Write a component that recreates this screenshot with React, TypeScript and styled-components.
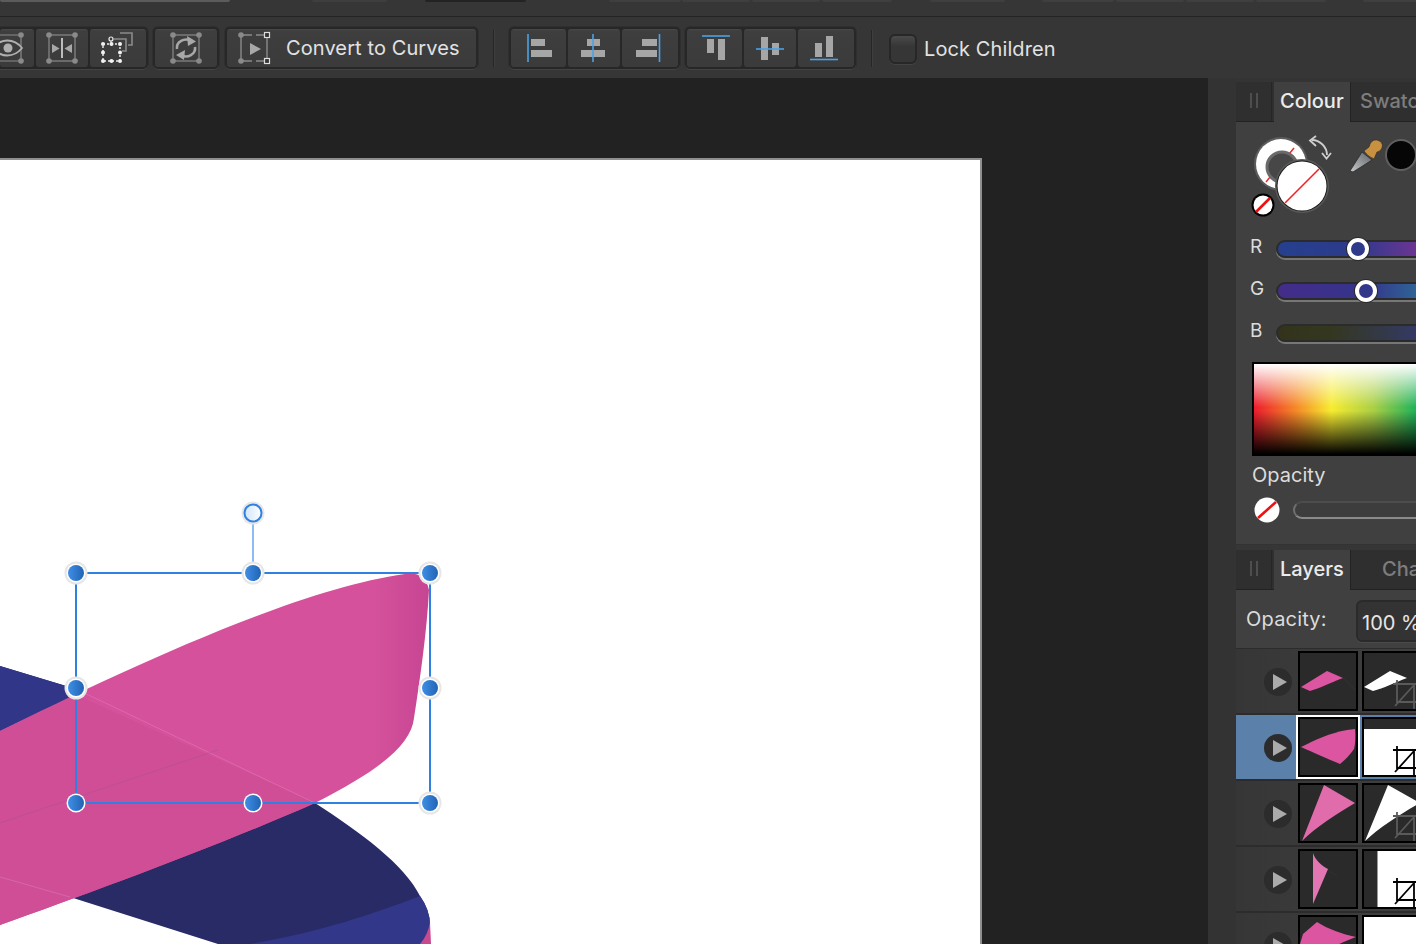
import React from "react";
import styled, { createGlobalStyle } from "styled-components";

const Global = createGlobalStyle`
  html, body { margin: 0; padding: 0; background: #222; overflow: hidden; }
  body { font-family: Inter, "Liberation Sans", sans-serif; -webkit-font-smoothing: antialiased; }
`;

const Root = styled.div`
  width: 1416px; height: 944px; overflow: hidden; display: flex; flex-direction: column; background: #222;
`;
const TopStrip = styled.div`
  height: 16px; flex: none; display: flex; align-items: flex-start; background: #363636; border-bottom: 1px solid #232323;
`;
const StripSeg = styled.div<{ $w: number; $ml: number; $c: string }>`
  flex: none; height: 2px; width: ${p => p.$w}px; margin-left: ${p => p.$ml}px; background: ${p => p.$c}; border-radius: 0 0 3px 3px;
`;
const Toolbar = styled.div`
  height: 61px; flex: none; display: flex; align-items: flex-start; padding-top: 10px; box-sizing: border-box; background: #363636;
`;
const Group = styled.div<{ $ml: number; $flat?: boolean }>`
  flex: none; display: flex; gap: 2px; height: 42px; box-sizing: border-box; padding: 2px;
  margin-left: ${p => p.$ml}px; background: #272727;
  border-radius: ${p => (p.$flat ? "0 5px 5px 0" : "5px")};
  padding-left: ${p => (p.$flat ? 0 : 2)}px;
  box-shadow: 0 1px 0 #434343, 0 0 0 1px #2f2f2f;
`;
const ToolButton = styled.div`
  flex: none; display: flex; align-items: center; height: 38px; border-radius: 3px;
  background: linear-gradient(#494949 0, #3e3e3e 2px, #3b3b3b 100%);
`;
const ToolIcon = styled.svg`
  flex: none; display: block; height: 38px;
`;
const ToolLabel = styled.span`
  font-size: 20px; color: #e2e2e2; white-space: nowrap; letter-spacing: 0.1px;
`;
const Sep = styled.div<{ $ml: number }>`
  flex: none; width: 1px; height: 37px; margin-top: 3px; margin-left: ${p => p.$ml}px; background: #262626; box-shadow: 1px 0 0 #3e3e3e;
`;
const Check = styled.div`
  flex: none; width: 28px; height: 30px; margin: 7px 0 0 17px; box-sizing: border-box; border: 2px solid #272727; border-radius: 6px;
  background: linear-gradient(#4a4a4a, #363636 40%); box-shadow: 0 1px 0 #434343;
`;
const CheckLabel = styled.span`
  font-size: 20px; color: #e2e2e2; white-space: nowrap; margin: 10px 0 0 7px; letter-spacing: 0.1px;
`;
const Main = styled.div`
  flex: 1; min-height: 0; display: flex;
`;
const Canvas = styled.div`
  width: 1208px; flex: none; padding-top: 80px; box-sizing: border-box; background: #222; overflow: hidden;
`;
const Page = styled.div`
  position: relative; width: 982px; height: 790px; box-sizing: border-box; background: #fff;
  border-top: 2px solid #8f8f8f; border-right: 2px solid #8f8f8f;
`;
const Art = styled.svg`
  position: absolute; left: 0; top: 0; display: block; overflow: visible;
`;
const Gutter = styled.div`
  width: 28px; flex: none; background: #333;
`;
const Panel = styled.div`
  width: 180px; flex: none; background: #343434; padding-top: 4px; box-sizing: border-box; overflow: hidden; display: flex; flex-direction: column;
`;
const TabBar = styled.div`
  height: 40px; flex: none; display: flex; background: #2f2f2f; border-bottom: 1px solid #222; box-sizing: border-box;
`;
const Grip = styled.div`
  width: 36px; flex: none; display: flex; justify-content: center; gap: 4px; padding-top: 11px; box-sizing: border-box; border-right: 1px solid #262626;
  i { display: block; width: 2px; height: 15px; background: #4e4e4e; }
`;
const Tab = styled.div<{ $active?: boolean; $pl: number }>`
  flex: none; font-size: 20px; line-height: 38px; white-space: nowrap; box-sizing: border-box;
  margin-left: ${p => (p.$active ? 2 : 0)}px;
  width: ${p => (p.$active ? "77px" : "auto")};
  padding-left: ${p => p.$pl}px;
  font-weight: 500;
  color: ${p => (p.$active ? "#ececec" : "#7d7d7d")};
  background: ${p => (p.$active ? "#404040" : "transparent")};
  height: ${p => (p.$active ? "40px" : "39px")};
  border-right: ${p => (p.$active ? "1px solid #222" : "none")};
`;
const ColourBody = styled.div`
  height: 422px; flex: none; background: #404040; display: flex; flex-direction: column; box-sizing: border-box; padding-top: 12px;
`;
const PanelGap = styled.div`
  height: 6px; flex: none; background: #363636; border-top: 1px solid #333;
  box-sizing: border-box;
`;
const SwatchRow = styled.div`
  height: 84px; flex: none; display: flex; padding-left: 14px; align-items: flex-start; margin-bottom: 10px;
`;
const Selector = styled.svg`
  flex: none; display: block;
`;
const Dropper = styled.svg`
  flex: none; display: block; margin: 4px 0 0 14px;
`;
const BlackSwatch = styled.div`
  flex: none; width: 32px; height: 32px; box-sizing: border-box; margin: 5px 0 0 1px; border-radius: 50%; background: #060606; border: 2px solid #5f5f5f;
`;
const SliderRow = styled.div`
  height: 42px; flex: none; display: flex; align-items: center; padding-left: 14px;
`;
const SliderLabel = styled.span`
  flex: none; width: 26px; font-size: 19px; color: #dcdcdc; margin-top: -5px;
`;
const Track = styled.div<{ $bg: string }>`
  position: relative; flex: none; width: 180px; height: 18px; box-sizing: border-box; border-radius: 9px;
  border: 2px solid #2b2b2b; background: ${p => p.$bg}; box-shadow: 0 2px 0 #777;
`;
const Knob = styled.div<{ $x: number; $c: string }>`
  position: absolute; top: -4px; left: ${p => p.$x}px; width: 22px; height: 22px; box-sizing: border-box; border-radius: 50%;
  background: ${p => p.$c}; border: 4px solid #fff; box-shadow: 0 0 0 1px #2a2a2a;
`;
const Picker = styled.div`
  flex: none; width: 180px; height: 94px; margin: 8px 0 0 16px; box-sizing: border-box; border: 2px solid #000;
  background:
    linear-gradient(to bottom, #fff 0, rgba(255,255,255,0) 48%, rgba(0,0,0,0) 52%, #000 100%),
    linear-gradient(to right, #ec1c2e 0, #f58a28 24%, #f7ec30 44%, #aacf45 68%, #1fb25a 92%, #18b48a 100%);
`;
const OpacityLabel = styled.div`
  flex: none; font-size: 20px; color: #dcdcdc; margin: 7px 0 0 16px; line-height: 24px;
`;
const OpacityRow = styled.div`
  flex: none; height: 28px; margin-top: 9px; padding-left: 18px; display: flex; align-items: center; gap: 13px;
`;
const NoFill = styled.svg`
  flex: none; display: block;
`;
const OpacityTrack = styled.div`
  flex: none; width: 180px; height: 18px; box-sizing: border-box; border-radius: 9px; background: #3d3d3d;
  border: 2px solid #6f6f6f; border-top-color: #4d4d4d; border-bottom-color: #8a8a8a;
`;
const LayersBody = styled.div`
  flex: 1; min-height: 0; background: #3a3a3a; display: flex; flex-direction: column;
`;
const LayersHead = styled.div`
  height: 59px; flex: none; box-sizing: border-box; background: #404040; border-bottom: 1px solid #2c2c2c; display: flex; padding: 10px 0 0 10px;
`;
const HeadLabel = styled.span`
  flex: none; width: 110px; font-size: 20px; color: #dcdcdc; line-height: 38px; letter-spacing: 0.2px;
`;
const ValueBox = styled.div`
  flex: none; width: 80px; height: 42px; box-sizing: border-box; padding-left: 4px; border: 2px solid #2a2a2a; border-radius: 6px; background: #333;
  font-size: 20px; line-height: 42px; color: #e6e6e6; white-space: nowrap; box-shadow: 0 1px 0 #4a4a4a;
`;
const LayerRow = styled.div<{ $sel?: boolean }>`
  height: 66px; flex: none; box-sizing: border-box; border-bottom: 2px solid #2c2c2c; display: flex; align-items: flex-start; padding: 2px 0 0 28px;
  background: ${p => (p.$sel ? "#5b80a9" : "linear-gradient(to right, #363636, #404040)")};
`;
const Play = styled.div`
  flex: none; width: 28px; height: 28px; margin: 17px 6px 0 0; border-radius: 50%; background: #2c2c2c; display: flex; align-items: center; justify-content: center;
`;
const PlayIcon = styled.svg`
  display: block; margin-left: 3px;
`;
const Thumb = styled.div<{ $first?: boolean; $sel?: boolean; $bg?: string }>`
  flex: none; width: 60px; height: 60px; box-sizing: border-box; border: 2px solid #000; background: ${p => p.$bg || "#2a2a2a"};
  margin-right: 4px; overflow: hidden;
  box-shadow: ${p => (p.$sel && p.$first ? "0 0 0 2px #fff" : "none")};
`;
const ThumbArt = styled.svg`
  display: block;
`;

const Dot = ({ x, y }: { x: number; y: number }) => <circle cx={x} cy={y} r={2.8} fill="#8a8a8a" />;
const G = "#8a8a8a";
const Bl = "#4aa3e8";
const B = "#a6a6a6";

const Crop = ({ c }: { c: string }) => (
  <path d="M29 31H56M33 27V49H56M50 31V56M31 53L50 32" fill="none" stroke={c} strokeWidth={1.8} />
);

const PinkA = "#dc55a0";

const rows = [
  {
    pink: <><path d="M1 34L27 18L43 25C30 30 20 35 10 38Z" fill={PinkA} /><path d="M43 25L55 37" stroke="#4a2a3a" strokeWidth={0.6} /></>,
    white: <><path d="M0 34L26 18L43 25C30 30 20 35 9 38Z" fill="#fff" /><Crop c="#5a5a5a" /></>,
    bg: "#2a2a2a",
  },
  {
    pink: <path d="M1 28C15 21 30 14 47 11L55 10Q56 22 54 30C50 36 45 41 40 45C28 40 12 33 1 28Z" fill={PinkA} />,
    white: <><rect x={0} y={10} width={56} height={46} fill="#fff" /><Crop c="#000" /></>,
    bg: "#2a2a2a",
    sel: true,
  },
  {
    pink: <path d="M24 0L55 18C38 28 16 42 2 56Z" fill="#e06cab" />,
    white: <><path d="M24 0L56 18C38 28 16 42 1 56Z" fill="#fff" /><Crop c="#5a5a5a" /></>,
    bg: "#2a2a2a",
  },
  {
    pink: <><path d="M13 2C15 9 22 15 28 18L13 53Z" fill="#e276b2" /><path d="M29 20L37 25" stroke="#4a2a3a" strokeWidth={0.6} /></>,
    white: <><rect x={0} y={0} width={13} height={56} fill="#2a2a2a" /><rect x={13} y={0} width={1} height={56} fill="#999" /><rect x={14} y={0} width={42} height={56} fill="#fff" /><Crop c="#000" /></>,
    bg: "#2a2a2a",
  },
  {
    pink: <path d="M0 27L3 17L17 5C28 12 42 17 56 20C40 26 28 32 18 40L0 40Z" fill="#dc55a0" />,
    white: <rect x={0} y={0} width={56} height={56} fill="#fff" />,
    bg: "#fff",
  },
];

const segs = [
  { w: 230, ml: 0, c: "#5c5c5c" },
  { w: 75, ml: 82, c: "#3e3e3e" },
  { w: 101, ml: 38, c: "#232323" },
  { w: 72, ml: 83, c: "#3f3f3f" },
  { w: 68, ml: 1, c: "#3f3f3f" },
  { w: 68, ml: 2, c: "#3f3f3f" },
  { w: 70, ml: 2, c: "#3f3f3f" },
  { w: 75, ml: 38, c: "#3f3f3f" },
  { w: 72, ml: 37, c: "#3f3f3f" },
  { w: 68, ml: 2, c: "#3f3f3f" },
  { w: 68, ml: 2, c: "#3f3f3f" },
  { w: 70, ml: 2, c: "#3f3f3f" },
  { w: 60, ml: 37, c: "#3f3f3f" },
];

const Tool = ({ x, w, children, label }: { x: number; w: number; children: React.ReactNode; label?: string }) => (
  <ToolButton style={{ width: w }}>
    <ToolIcon width={label ? 59 : w} height={38} viewBox={`${x} 29 ${label ? 59 : w} 38`}>{children}</ToolIcon>
    {label && <ToolLabel>{label}</ToolLabel>}
  </ToolButton>
);

const Bar = ({ x, y, w, h }: { x: number; y: number; w: number; h: number }) => <rect x={x} y={y} width={w} height={h} fill={B} />;
const Blue = ({ d }: { d: string }) => <path d={d} stroke={Bl} strokeWidth={1.6} fill="none" />;

const Handle = ({ x, y, halo = true }: { x: number; y: number; halo?: boolean }) => (
  <g>
    {halo && <circle cx={x} cy={y} r={11.5} fill="#e6e6e6" />}
    <circle cx={x} cy={y} r={9.5} fill="#fff" />
    <circle cx={x} cy={y} r={8} fill="url(#hgrad)" />
  </g>
);

const handles = [
  { x: 76, y: 573 }, { x: 253, y: 573 }, { x: 430, y: 573 },
  { x: 76, y: 688 }, { x: 430, y: 688 },
  { x: 76, y: 803, halo: false }, { x: 253, y: 803, halo: false }, { x: 430, y: 803 },
];

export default function App() {
  return (
    <Root>
      <Global />
      <TopStrip>
        {segs.map((s, i) => <StripSeg key={i} $w={s.w} $ml={s.ml} $c={s.c} />)}
      </TopStrip>
      <Toolbar>
        <Group $ml={0} $flat>
          <Tool x={0} w={34}>
            <path d="M0 35H21V61H0" fill="none" stroke={G} strokeWidth={1.2} />
            <Dot x={21} y={35} /><Dot x={21} y={61} />
            <path d="M-6 48C0 38 14 38 22 48C14 58 0 58 -6 48Z" fill="#3c3c3c" stroke="#b0b0b0" strokeWidth={1.8} />
            <circle cx={8} cy={48} r={4.5} fill="#b0b0b0" />
          </Tool>
          <Tool x={36} w={52}>
            <rect x={49} y={35} width={26} height={26} fill="none" stroke={G} strokeWidth={1.2} />
            <Dot x={49} y={35} /><Dot x={75} y={35} /><Dot x={49} y={61} /><Dot x={75} y={61} />
            <path d="M62 38V58" stroke="#bdbdbd" strokeWidth={2} />
            <path d="M52 44L59.5 48.5L52 53Z" fill="#a8a8a8" />
            <path d="M72 44L64.5 48.5L72 53Z" fill="#a8a8a8" />
          </Tool>
          <Tool x={90} w={56}>
            <path d="M120 33H132V45H128" fill="none" stroke={G} strokeWidth={1.6} />
            <path d="M114 39H126V51H122" fill="none" stroke={G} strokeWidth={1.6} />
            <rect x={103} y={44} width={17} height={17} fill="none" stroke="#eee" strokeWidth={1.4} strokeDasharray="2 2" />
            {[[103, 44], [111.5, 44], [120, 44], [103, 52.5], [120, 52.5], [103, 61], [111.5, 61], [120, 61]].map(([x, y], i) => (
              <circle key={i} cx={x} cy={y} r={2} fill="#f2f2f2" />
            ))}
            <path d="M111 41V44" stroke="#eee" strokeWidth={1} />
            <circle cx={111} cy={39} r={2} fill="none" stroke="#eee" strokeWidth={1.2} />
          </Tool>
        </Group>
        <Group $ml={5}>
          <Tool x={155} w={62}>
            <rect x={173} y={35} width={26} height={26} fill="none" stroke={G} strokeWidth={1.2} />
            <Dot x={173} y={35} /><Dot x={199} y={35} /><Dot x={173} y={61} /><Dot x={199} y={61} />
            <path d="M177 49C176 42 184 37 192 41" fill="none" stroke="#a8a8a8" strokeWidth={2.6} />
            <path d="M187 36L196 41.5L188 46Z" fill="#a8a8a8" />
            <path d="M195 47C196 54 188 59 180 55" fill="none" stroke="#a8a8a8" strokeWidth={2.6} />
            <path d="M185 50L176 55L184 60Z" fill="#a8a8a8" />
          </Tool>
        </Group>
        <Group $ml={6}>
          <Tool x={227} w={249} label="Convert to Curves">
            <path d="M241 35H252M256 35H264M241 61H252M256 61H264M241 35V61M267 38V58" fill="none" stroke={G} strokeWidth={1.4} />
            <Dot x={241} y={35} /><Dot x={241} y={61} />
            <rect x={264.5} y={32.5} width={5} height={5} fill="#333" stroke="#ddd" strokeWidth={1.2} />
            <rect x={264.5} y={58.5} width={5} height={5} fill="#333" stroke="#ddd" strokeWidth={1.2} />
            <path d="M250 43L261 49L250 55Z" fill="#a8a8a8" />
          </Tool>
        </Group>
        <Sep $ml={15} />
        <Group $ml={15}>
          <Tool x={511} w={55}>
            <Bar x={531} y={39} w={14} h={7} /><Bar x={531} y={50} w={21} h={7} /><Blue d="M528 34V62" />
          </Tool>
          <Tool x={568} w={52}>
            <Bar x={587} y={39} w={13} h={7} /><Bar x={581} y={50} w={24} h={7} /><Blue d="M593 34V62" />
          </Tool>
          <Tool x={622} w={56}>
            <Bar x={642} y={39} w={15} h={7} /><Bar x={636} y={50} w={21} h={7} /><Blue d="M659.5 34V62" />
          </Tool>
        </Group>
        <Group $ml={5}>
          <Tool x={687} w={55}>
            <Bar x={707} y={39} w={7} h={14} /><Bar x={718} y={39} w={7} h={21} /><Blue d="M702 36H730" />
          </Tool>
          <Tool x={744} w={52}>
            <Bar x={761} y={37} w={7} h={23} /><Bar x={772} y={43} w={7} h={12} /><Blue d="M756 49H784" />
          </Tool>
          <Tool x={798} w={56}>
            <Bar x={815} y={43} w={7} h={14} /><Bar x={826} y={36} w={7} h={21} /><Blue d="M810 59.5H838" />
          </Tool>
        </Group>
        <Sep $ml={15} />
        <Check />
        <CheckLabel>Lock Children</CheckLabel>
      </Toolbar>
      <Main>
        <Canvas>
          <Page>
            <Art width={980} height={788} viewBox="0 160 980 788">
              <defs>
                <linearGradient id="hgrad" x1="0" y1="0" x2="1" y2="0">
                  <stop offset="0" stopColor="#3f8fe6" />
                  <stop offset="1" stopColor="#2163b4" />
                </linearGradient>
                <linearGradient id="rgrad" x1="0" y1="0" x2="1" y2="0">
                  <stop offset="0" stopColor="#cfe4fb" />
                  <stop offset="1" stopColor="#ffffff" />
                </linearGradient>
                <linearGradient id="pgrad" gradientUnits="userSpaceOnUse" x1="0" y1="0" x2="430" y2="0">
                  <stop offset="0" stopColor="#d5519b" />
                  <stop offset="0.87" stopColor="#d5519b" />
                  <stop offset="1" stopColor="#c64592" />
                </linearGradient>
              </defs>
              <path d="M0 666L76 689C160 720 250 760 315 803C360 832 405 865 420 896Q430 910 430 925L430 944L218 944L70 897L0 877Z" fill="#282b66" />
              <path d="M0 666L76 689L100 705L0 760Z" fill="#323688" />
              <path d="M420 896Q430 910 430 925L430 944L250 944C320 932 370 915 420 896Z" fill="#32378a" />
              <path d="M430 922L431 944L420 944Q428 935 430 922Z" fill="#c9498f" />
              <path d="M0 731C110 677 290 590 405 574Q425 571 429 590C427 630 420 680 414 718C411 745 380 770 315 803C220 845 90 893 0 925Z" fill="url(#pgrad)" />
              <path d="M0 731L76 695L315 803C220 845 90 893 0 925Z" fill="#cf4e96" />
              <path d="M76 689L315 803" stroke="#e58cbd" strokeWidth={0.6} strokeOpacity={0.7} fill="none" />
              <path d="M0 823L218 750" stroke="#a8528f" strokeWidth={0.6} strokeOpacity={0.8} fill="none" />
              <path d="M0 877L70 897" stroke="#e58cbd" strokeWidth={0.6} strokeOpacity={0.7} fill="none" />
              <path d="M253 520V565" stroke="#8dbcf2" strokeWidth={2} />
              <rect x={76} y={573} width={354} height={230} fill="none" stroke="#2f80e0" strokeWidth={2} />
              <circle cx={253} cy={513} r={11.5} fill="#e6e6e6" />
              <circle cx={253} cy={513} r={8.5} fill="url(#rgrad)" stroke="#2f80e0" strokeWidth={2} />
              {handles.map((h, i) => <Handle key={i} x={h.x} y={h.y} halo={h.halo !== false} />)}
            </Art>
          </Page>
        </Canvas>
        <Gutter />
        <Panel>
          <TabBar>
            <Grip><i /><i /></Grip>
            <Tab $active $pl={6}>Colour</Tab>
            <Tab $pl={9}>Swatches</Tab>
          </TabBar>
          <ColourBody>
            <SwatchRow>
              <Selector width={84} height={84} viewBox="1250 134 84 84">
                <circle cx={1281} cy={164} r={27} fill="#5c5c5c" />
                <circle cx={1281} cy={164} r={25} fill="#fff" />
                <path d="M1294 148L1266 182" stroke="#ee2222" strokeWidth={1.4} />
                <circle cx={1282} cy={167} r={15} fill="#474747" stroke="#6a6a6a" strokeWidth={3} />
                <circle cx={1302} cy={186} r={27} fill="#595959" />
                <circle cx={1302} cy={186} r={25.5} fill="#1c1c1c" />
                <circle cx={1302} cy={186} r={24.5} fill="#fff" />
                <path d="M1319 169L1285 203" stroke="#ee2222" strokeWidth={1.6} />
                <circle cx={1263} cy={205} r={11.5} fill="#000" />
                <circle cx={1263} cy={205} r={9.5} fill="#fff" />
                <path d="M1256 212L1270 198" stroke="#ee1111" strokeWidth={2.6} />
                <path d="M1312 140C1320 140 1327 147 1327 155" fill="none" stroke="#cfcfcf" strokeWidth={1.8} />
                <path d="M1316 136L1310 140.5L1316 146M1322 153L1326.5 158.5L1331 153" fill="none" stroke="#cfcfcf" strokeWidth={1.8} />
              </Selector>
              <Dropper width={36} height={36} viewBox="1348 138 36 36">
                <defs>
                  <linearGradient id="dg" x1="0" y1="1" x2="1" y2="0">
                    <stop offset="0" stopColor="#c9c9c9" />
                    <stop offset="1" stopColor="#5f6468" />
                  </linearGradient>
                </defs>
                <path d="M1350 171L1362 152L1372 160L1353 172Z" fill="url(#dg)" stroke="#2a2a2a" strokeWidth={0.8} />
                <path d="M1364 151L1369 147Q1371 139 1377 140Q1384 142 1382 148Q1380 152 1377 152L1374 159Q1367 156 1364 151Z" fill="#c8913f" stroke="#2a2a2a" strokeWidth={0.6} />
              </Dropper>
              <BlackSwatch />
            </SwatchRow>
            <SliderRow>
              <SliderLabel>R</SliderLabel>
              <Track $bg="linear-gradient(to right, #25408e 0, #2e3a8c 45%, #6a3592 78%, #8a3294 100%)"><Knob $x={69} $c="#2f3a8a" /></Track>
            </SliderRow>
            <SliderRow>
              <SliderLabel>G</SliderLabel>
              <Track $bg="linear-gradient(to right, #442c8a 0, #34348a 50%, #2f6696 80%, #2f8a9a 100%)"><Knob $x={77} $c="#33378a" /></Track>
            </SliderRow>
            <SliderRow>
              <SliderLabel>B</SliderLabel>
              <Track $bg="linear-gradient(to right, #33331c 0, #34371f 30%, #333a66 80%, #30408a 100%)" />
            </SliderRow>
            <Picker />
            <OpacityLabel>Opacity</OpacityLabel>
            <OpacityRow>
              <NoFill width={26} height={26} viewBox="0 0 26 26">
                <circle cx={13} cy={13} r={12.5} fill="#fff" />
                <path d="M4 21L22 5" stroke="#ee1111" strokeWidth={2.6} />
              </NoFill>
              <OpacityTrack />
            </OpacityRow>
          </ColourBody>
          <PanelGap />
          <TabBar>
            <Grip><i /><i /></Grip>
            <Tab $active $pl={6}>Layers</Tab>
            <Tab $pl={31}>Channels</Tab>
          </TabBar>
          <LayersBody>
            <LayersHead>
              <HeadLabel>Opacity:</HeadLabel>
              <ValueBox>100 %</ValueBox>
            </LayersHead>
            {rows.map((r, i) => (
              <LayerRow key={i} $sel={r.sel}>
                <Play>
                  <PlayIcon width={14} height={16} viewBox="0 0 14 16"><path d="M0 0L14 8L0 16Z" fill="#ababab" /></PlayIcon>
                </Play>
                <Thumb $first $sel={r.sel}>
                  <ThumbArt width={56} height={56} viewBox="0 0 56 56">{r.pink}</ThumbArt>
                </Thumb>
                <Thumb $bg={r.bg}>
                  <ThumbArt width={56} height={56} viewBox="0 0 56 56">{r.white}</ThumbArt>
                </Thumb>
              </LayerRow>
            ))}
          </LayersBody>
        </Panel>
      </Main>
    </Root>
  );
}
